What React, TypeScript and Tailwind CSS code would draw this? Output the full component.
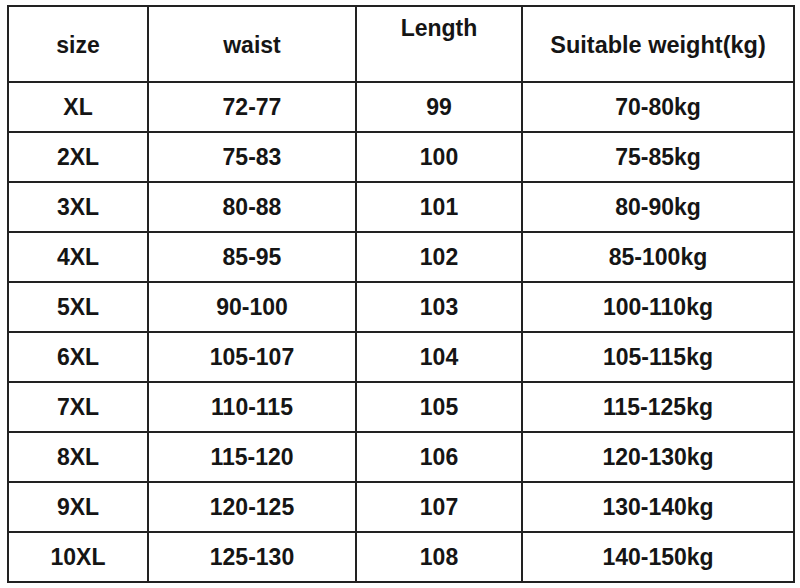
const rows: [string, string, string, string][] = [
  ["XL", "72-77", "99", "70-80kg"],
  ["2XL", "75-83", "100", "75-85kg"],
  ["3XL", "80-88", "101", "80-90kg"],
  ["4XL", "85-95", "102", "85-100kg"],
  ["5XL", "90-100", "103", "100-110kg"],
  ["6XL", "105-107", "104", "105-115kg"],
  ["7XL", "110-115", "105", "115-125kg"],
  ["8XL", "115-120", "106", "120-130kg"],
  ["9XL", "120-125", "107", "130-140kg"],
  ["10XL", "125-130", "108", "140-150kg"],
];

export default function App() {
  return (
    <div className="w-[800px] h-[588px] bg-white pt-[5px] pl-[7px] font-['Liberation_Sans',Arial,sans-serif] font-bold text-[#151515]">
      <div className="grid w-fit grid-cols-[138px_206px_164px_270px] grid-rows-[74px_repeat(10,48px)] gap-[2px] p-[2px] bg-[#222]">
        <div className="bg-white flex items-center justify-center text-[23px] pt-[2px]">size</div>
        <div className="bg-white flex items-center justify-center text-[23px] pt-[2px]">waist</div>
        <div className="bg-white flex justify-center text-[23px] pt-[4px]">Length</div>
        <div className="bg-white flex items-center justify-center text-[23.5px] pt-[4px]">Suitable weight(kg)</div>
        {rows.map((r) =>
          r.map((cell, i) => (
            <div key={r[0] + i} className="bg-white flex items-center justify-center text-[23px]">
              {cell}
            </div>
          ))
        )}
      </div>
    </div>
  );
}
